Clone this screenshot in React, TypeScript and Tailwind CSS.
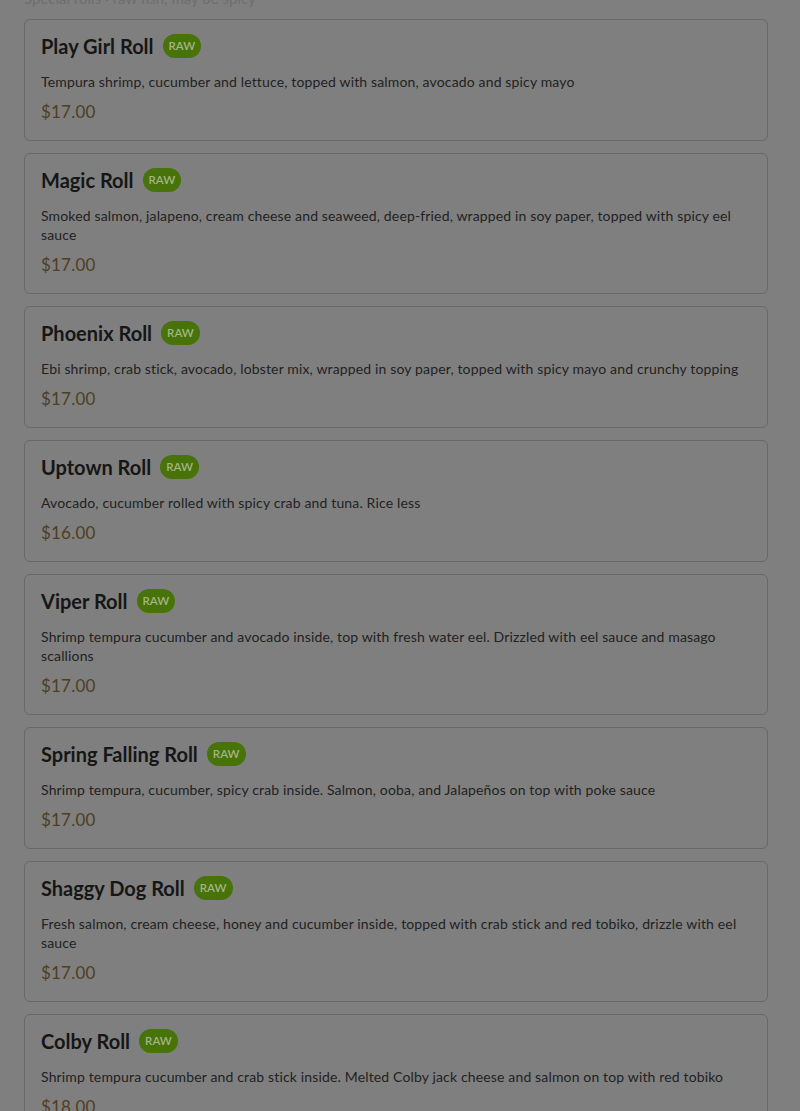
import React from 'react';

interface Roll {
  name: string;
  description: string;
  price: string;
}

const rolls: Roll[] = [
  { name: 'Play Girl Roll', description: 'Tempura shrimp, cucumber and lettuce, topped with salmon, avocado and spicy mayo', price: '$17.00' },
  { name: 'Magic Roll', description: 'Smoked salmon, jalapeno, cream cheese and seaweed, deep-fried, wrapped in soy paper, topped with spicy eel sauce', price: '$17.00' },
  { name: 'Phoenix Roll', description: 'Ebi shrimp, crab stick, avocado, lobster mix, wrapped in soy paper, topped with spicy mayo and crunchy topping', price: '$17.00' },
  { name: 'Uptown Roll', description: 'Avocado, cucumber rolled with spicy crab and tuna. Rice less', price: '$16.00' },
  { name: 'Viper Roll', description: 'Shrimp tempura cucumber and avocado inside, top with fresh water eel. Drizzled with eel sauce and masago scallions', price: '$17.00' },
  { name: 'Spring Falling Roll', description: 'Shrimp tempura, cucumber, spicy crab inside. Salmon, ooba, and Jalapeños on top with poke sauce', price: '$17.00' },
  { name: 'Shaggy Dog Roll', description: 'Fresh salmon, cream cheese, honey and cucumber inside, topped with crab stick and red tobiko, drizzle with eel sauce', price: '$17.00' },
  { name: 'Colby Roll', description: 'Shrimp tempura cucumber and crab stick inside. Melted Colby jack cheese and salmon on top with red tobiko', price: '$18.00' },
];

function RollCard({ roll }: { roll: Roll }) {
  return (
    <div className="rounded-md border border-[#686868] px-4 pt-[14px] pb-4">
      <div className="flex h-6 items-center gap-[9px]">
        <h3 className="text-[20px] font-bold leading-6 text-[#161616]">{roll.name}</h3>
        <span className="flex h-6 items-center rounded-full bg-[#48720a] px-[6px] text-[11.5px] font-semibold text-[#a3b585]">
          RAW
        </span>
      </div>
      <p className="mt-[14px] text-[14px] leading-[19px] tracking-[0.15px] text-[#222222]">{roll.description}</p>
      <div className="mt-[9px] text-[17px] leading-6 tracking-[0.2px] text-[#4f3e22]">{roll.price}</div>
    </div>
  );
}

export default function App() {
  return (
    <div
      className="min-h-[1111px] overflow-hidden bg-[#7f7f7f] pl-6 pr-8"
      style={{ fontFamily: 'Lato, "Open Sans", "Liberation Sans", sans-serif' }}
    >
      <div className="-mt-[13px] mb-[10px] text-[15px] leading-[22px] text-[#6e6e6e]">
        Special rolls · raw fish, may be spicy
      </div>
      <div className="flex flex-col gap-3">
        {rolls.map((r) => (
          <RollCard key={r.name} roll={r} />
        ))}
      </div>
    </div>
  );
}
